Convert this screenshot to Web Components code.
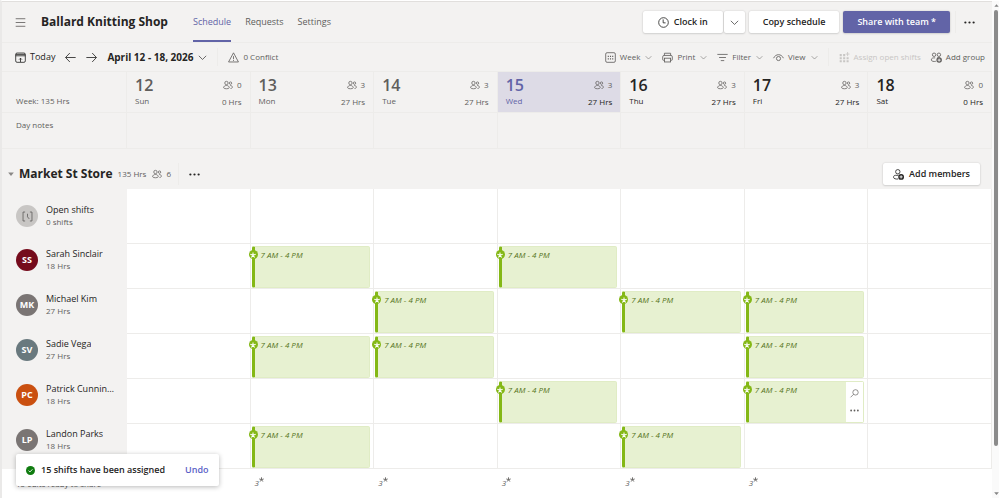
<!DOCTYPE html>
<html lang="en">
<head>
<meta charset="utf-8">
<meta name="viewport" content="width=device-width, initial-scale=1">
<title>Shifts - Ballard Knitting Shop</title>
<style>
  :root {
    --bg: #f3f2f1;
    --line: #edecea;
    --text: #252423;
    --soft: #605e5c;
    --muted: #8a8886;
    --brand: #6264a7;
    --green: #84b816;
    --small: 8px;
    --base: 9px;
  }
  body {
    margin: 0;
    background: #fff;
    color: var(--text);
    font: 400 9px/12px "Open Sans", "Noto Sans", sans-serif;
  }
</style>
</head>
<body>
<shifts-app></shifts-app>

<script>
const ICONS = {
  menu: '<path d="M1 2.5h14M1 8h14M1 13.5h14"/>',
  today: '<rect x="1" y="1.5" width="14" height="13.5" rx="2"/><path d="M1 3.5h14M1 5.5h14M8 14.5V9M6 11l2-2 2 2"/>',
  left: '<path d="M15.5 8H1M7 1.5L.8 8 7 14.5"/>',
  right: '<path d="M.5 8H15M9 1.5L15.2 8 9 14.5"/>',
  chevron: '<path d="M1.5 5L8 11.5 14.5 5"/>',
  warn: '<path d="M8 1.2L15.2 14.5H.8z" stroke-linejoin="round"/><path d="M8 6v4.5M8 11.7v1.3"/>',
  week: '<rect x="1" y="1" width="14" height="14" rx="2"/><path d="M4 6.5h1.6M7.2 6.5h1.6M10.4 6.5H12M4 10h1.6M7.2 10h1.6M10.4 10H12" stroke-width="1.8"/>',
  print: '<path d="M3.5 5V1.8h9V5M3.5 12H2a1 1 0 0 1-1-1V7a2 2 0 0 1 2-2h10a2 2 0 0 1 2 2v4a1 1 0 0 1-1 1h-1.5"/><rect x="3.5" y="9" width="9" height="5.5"/>',
  filter: '<path d="M.5 3.5h15M3 8h10M5.5 12.5h5"/>',
  view: '<path d="M.8 9C4 2.2 12 2.2 15.2 9"/><circle cx="8" cy="9.5" r="3"/>',
  assign: '<path d="M1 3h3v3H1zM6 3h3v3H6zM1 7.5h3v3H1zM6 7.5h3v3H6zM11 7.5h3v3h-3zM1 12h3v3H1zM6 12h3v3H6zM11 12h3v3h-3z" fill="currentColor" stroke="none"/><path d="M12.5 0v6M9.8 3h5.4"/>',
  people: '<circle cx="5.5" cy="4.8" r="2.7"/><path d="M1 12.5c0-5 9-5 9 0 0 2-9 2-9 0z"/><circle cx="12" cy="5" r="1.9"/><path d="M11.5 8.8c4-.2 5 4.7.5 4.8"/>',
  addGroup: '<circle cx="4.5" cy="4" r="2.5"/><circle cx="11.5" cy="4" r="2.5"/><path d="M7 13.5c-3 .8-6.5 0-6.5-2C.5 9 2 8.5 6 8.5M9 8.5h4"/><circle cx="11.8" cy="11.8" r="4" fill="currentColor" stroke="none"/><path d="M11.8 9.6v4.4M9.6 11.8H14" stroke="#fff" stroke-width="1.2"/>',
  addMember: '<circle cx="7" cy="4" r="3.2"/><path d="M7.5 14.5C4 15 .8 14 .8 12 .8 10 2 9.2 3.5 9.2H8"/><circle cx="11.8" cy="11.5" r="4.2" fill="currentColor" stroke="none"/><path d="M11.8 9.2v4.6M9.5 11.5h4.6" stroke="#fff" stroke-width="1.3"/>',
  clock: '<circle cx="8" cy="8" r="7"/><path d="M7.5 3.5V8.5H11"/>',
  more: '<g fill="currentColor" stroke="none"><circle cx="2" cy="8" r="1.6"/><circle cx="8" cy="8" r="1.6"/><circle cx="14" cy="8" r="1.6"/></g>',
  caret: '<path d="M.5 4h15L8 13z" fill="currentColor" stroke="none"/>',
  caretUp: '<path d="M1 12h14L8 4z" fill="currentColor" stroke="none"/>',
  search: '<circle cx="9.8" cy="6" r="4.8"/><path d="M6.3 9.5L1 14.8"/>',
  check: '<circle cx="8" cy="8" r="8" fill="currentColor" stroke="none"/><path d="M4.5 8.2L7 10.6l4.5-4.8" stroke="#fff" stroke-width="1.5"/>',
  star: '<path d="M8 8.5V1M8 8.5L.9 6.2M8 8.5l7.1-2.3M8 8.5l-4.400 6.100M8 8.5l4.400 6.100" stroke-width="2.8"/>',
  open: '<path d="M4.5 1.5H1.5v13h3M11.5 1.5h3v13h-3M8 4v4.5l2.5 3"/>'
}

const DAYS = [
  { date: 12, name: 'Sun', people: 0, hours: 0, when: 'past' },
  { date: 13, name: 'Mon', people: 3, hours: 27, when: 'past' },
  { date: 14, name: 'Tue', people: 3, hours: 27, when: 'past' },
  { date: 15, name: 'Wed', people: 3, hours: 27, when: 'today' },
  { date: 16, name: 'Thu', people: 3, hours: 27, when: 'next' },
  { date: 17, name: 'Fri', people: 3, hours: 27, when: 'next' },
  { date: 18, name: 'Sat', people: 0, hours: 0, when: 'next' }
]

const MEMBERS = [
  { name: 'Sarah Sinclair', initials: 'SS', hours: 18, color: '#750b1c', shifts: [13, 15] },
  { name: 'Michael Kim', initials: 'MK', hours: 27, color: '#7a7574', shifts: [14, 16, 17] },
  { name: 'Sadie Vega', initials: 'SV', hours: 27, color: '#69797e', shifts: [13, 14, 17] },
  { name: 'Patrick Cunningham', initials: 'PC', hours: 18, color: '#ca5010', shifts: [15, 17], active: 17 },
  { name: 'Landon Parks', initials: 'LP', hours: 18, color: '#7a7574', shifts: [13, 16] }
]

class ShadowElement extends HTMLElement {
  constructor () {
    super()
    this.shadow = this.attachShadow({ mode: 'open' })
  }

  connectedCallback () {
    this.render()
  }
}

class UiIcon extends ShadowElement {
  render () {
    this.shadow.innerHTML =
      /*html*/`
      <style>
        :host{
          display: inline-flex;
          flex: none;
          height: var(--icon, 11px);
          width: var(--icon, 11px);
        }
        svg{
          fill: none;
          height: 100%;
          overflow: visible;
          stroke: currentColor;
          stroke-width: 1.2;
          width: 100%;
        }
      </style>
      <svg viewBox="0 0 16 16" aria-hidden="true">${ICONS[this.getAttribute('name')]}</svg>
      `
  }
}

class UiButton extends ShadowElement {
  render () {
    const label = this.getAttribute('label')
    this.shadow.innerHTML =
      /*html*/`
      <style>
        :host{
          display: inline-flex;
        }
        button{
          align-items: center;
          background: #fff;
          border: 0;
          border-radius: 2px;
          box-shadow: 0 0 2px rgba(0, 0, 0, 0.16), 0 1px 2px rgba(0, 0, 0, 0.1);
          color: var(--text);
          display: flex;
          font: inherit;
          font-weight: 600;
          gap: 5px;
          height: 22px;
          justify-content: center;
          padding: 0 var(--pad, 14px);
          white-space: nowrap;
        }
        :host([primary]) button{
          background: var(--brand);
          color: #fff;
        }
        :host([quiet]) button{
          background: none;
          box-shadow: none;
          padding: 0;
        }
      </style>
      <button type="button" ${label ? `aria-label="${label}"` : ''}><slot></slot></button>
      `
  }
}

class ShiftsHeader extends ShadowElement {
  render () {
    this.shadow.innerHTML =
      /*html*/`
      <style>
        :host{
          align-items: center;
          border-bottom: 1px solid var(--line);
          display: flex;
          height: 40px;
          padding: 0 17px 0 13px;
        }
        h1{
          font-size: 12px;
          font-weight: 700;
          line-height: 16px;
          margin: 0 25px 0 15px;
          white-space: nowrap;
        }
        nav{
          align-self: stretch;
          display: flex;
          gap: 14px;
        }
        nav a{
          align-items: center;
          border-bottom: 2px solid transparent;
          border-top: 2px solid transparent;
          color: var(--soft);
          display: flex;
          text-decoration: none;
        }
        nav a.active{
          border-bottom-color: var(--brand);
          color: var(--brand);
        }
        .actions{
          align-items: center;
          display: flex;
          gap: 4px;
          margin-left: auto;
        }
        .split{
          display: flex;
          gap: 1px;
        }
        .clock{
          --pad: 15px;
        }
        .arrow{
          --icon: 9px;
          --pad: 6px;
        }
        .more{
          border-left: 1px solid var(--line);
          margin-left: 1px;
          padding-left: 8px;
        }
      </style>

      <ui-button quiet label="Navigation"><ui-icon name="menu" style="color: var(--soft)"></ui-icon></ui-button>
      <h1>Ballard Knitting Shop</h1>
      <nav>
        <a href="#schedule" class="active">Schedule</a>
        <a href="#requests">Requests</a>
        <a href="#settings">Settings</a>
      </nav>
      <div class="actions">
        <div class="split">
          <ui-button class="clock"><ui-icon name="clock"></ui-icon>Clock in</ui-button>
          <ui-button class="arrow" label="Clock options"><ui-icon name="chevron"></ui-icon></ui-button>
        </div>
        <ui-button>Copy schedule</ui-button>
        <ui-button primary>Share with team *</ui-button>
        <ui-button class="more" quiet label="More options"><ui-icon name="more"></ui-icon></ui-button>
      </div>
      `
  }
}

class ToolbarItem extends ShadowElement {
  render () {
    const arrow = this.hasAttribute('menu') ? '<ui-icon class="arrow" name="chevron"></ui-icon>' : ''
    const icon = this.getAttribute('icon')
    this.shadow.innerHTML =
      /*html*/`
      <style>
        :host{
          color: var(--soft);
          display: inline-flex;
          font-size: var(--small);
        }
        button{
          align-items: center;
          background: none;
          border: 0;
          color: inherit;
          display: flex;
          font: inherit;
          gap: 4px;
          padding: 0;
          white-space: nowrap;
        }
        .arrow{
          --icon: 7px;
          margin-left: 1px;
        }
        :host([strong]){
          color: var(--text);
          font-size: 10px;
          font-weight: 700;
        }
        :host([strong]) .arrow{
          --icon: 9px;
        }
        :host([large]){
          color: var(--text);
          font-size: var(--base);
        }
        button:disabled{
          color: #c8c6c4;
        }
      </style>
      <button type="button" ${this.hasAttribute('disabled') ? 'disabled' : ''} ${this.title ? `aria-label="${this.title}"` : ''}>
        ${icon ? `<ui-icon name="${icon}"></ui-icon>` : ''}<slot></slot>${arrow}
      </button>
      `
  }
}

class ShiftsToolbar extends ShadowElement {
  render () {
    this.shadow.innerHTML =
      /*html*/`
      <style>
        :host{
          align-items: center;
          border-bottom: 1px solid var(--line);
          display: flex;
          height: 28px;
          justify-content: space-between;
          padding: 0 7px 0 13px;
        }
        div{
          align-items: center;
          display: flex;
          gap: 10px;
        }
        i{
          background: var(--line);
          height: 18px;
          width: 1px;
        }
      </style>

      <div>
        <toolbar-item large icon="today">Today</toolbar-item>
        <toolbar-item large icon="left" title="Previous week"></toolbar-item>
        <toolbar-item large icon="right" title="Next week"></toolbar-item>
        <toolbar-item strong menu>April 12 - 18, 2026</toolbar-item>
        <i></i>
        <toolbar-item icon="warn">0 Conflict</toolbar-item>
      </div>
      <div>
        <toolbar-item icon="week" menu>Week</toolbar-item>
        <toolbar-item icon="print" menu>Print</toolbar-item>
        <toolbar-item icon="filter" menu>Filter</toolbar-item>
        <toolbar-item icon="view" menu>View</toolbar-item>
        <i></i>
        <toolbar-item icon="assign" disabled>Assign open shifts</toolbar-item>
        <toolbar-item icon="addGroup">Add group</toolbar-item>
      </div>
      `
  }
}

class DayHead extends ShadowElement {
  render () {
    const day = DAYS[this.getAttribute('index')]
    this.shadow.innerHTML =
      /*html*/`
      <style>
        :host{
          display: flex;
          font-size: var(--small);
          height: 40px;
          justify-content: space-between;
        }
        .date{
          padding: 3px 8px 0;
        }
        .stats{
          padding: 4px 8px 0;
          text-align: right;
        }
        strong{
          display: block;
          font-size: 16px;
          font-weight: 600;
          line-height: 20px;
        }
        .count{
          align-items: center;
          color: var(--soft);
          display: flex;
          gap: 4px;
          height: 18px;
          justify-content: flex-end;
          margin-bottom: 2px;
          --icon: 10px;
        }
        .past{
          color: var(--soft);
        }
        .date.today{
          color: var(--brand);
        }
      </style>
      <div class="date ${day.when}"><strong>${day.date}</strong>${day.name}</div>
      <div class="stats ${day.when}">
        <div class="count"><ui-icon name="people"></ui-icon>${day.people}</div>
        ${day.hours} Hrs
      </div>
      `
  }
}

class MemberCell extends ShadowElement {
  render () {
    this.shadow.innerHTML =
      /*html*/`
      <style>
        :host{
          align-items: center;
          display: flex;
          gap: 8px;
          padding: 4px 12px 0 14px;
        }
        .avatar{
          align-items: center;
          background: var(--avatar, #c8c6c4);
          border-radius: 50%;
          color: #fff;
          display: flex;
          flex: none;
          font-weight: 700;
          height: 22px;
          justify-content: center;
          width: 22px;
        }
        .info{
          min-width: 0;
        }
        .name{
          overflow: hidden;
          text-overflow: ellipsis;
          white-space: nowrap;
        }
        .sub{
          color: var(--soft);
          font-size: var(--small);
        }
      </style>
      <div class="avatar"><slot name="avatar"></slot></div>
      <div class="info">
        <div class="name"><slot></slot></div>
        <div class="sub"><slot name="sub"></slot></div>
      </div>
      `
  }
}

class ShiftCard extends ShadowElement {
  render () {
    const tools = /*html*/`
      <div class="tools">
        <button type="button" aria-label="View shift"><ui-icon name="search"></ui-icon></button>
        <button type="button" aria-label="Shift options"><ui-icon name="more"></ui-icon></button>
      </div>`
    this.shadow.innerHTML =
      /*html*/`
      <style>
        :host{
          background: #e7f1d1;
          border: 1px solid #e0ecc5;
          border-left: 3px solid var(--green);
          border-radius: 2px;
          box-sizing: border-box;
          color: #55731a;
          display: flex;
          font-size: var(--small);
          font-style: italic;
          height: 42px;
          justify-content: space-between;
          margin: 2px 3px 0 1px;
          position: relative;
        }
        .time{
          padding: 2px 0 0 6px;
          white-space: nowrap;
        }
        /* unshared marker sits on the colour bar */
        .badge{
          align-items: center;
          background: var(--green);
          border-radius: 50%;
          color: #fff;
          display: flex;
          height: 9px;
          justify-content: center;
          left: -6px;
          position: absolute;
          top: 3px;
          width: 9px;
          --icon: 6px;
        }
        .tools{
          background: #fff;
          color: var(--soft);
          display: flex;
          flex-direction: column;
          justify-content: space-evenly;
          padding: 0 4px;
          --icon: 9px;
        }
        button{
          background: none;
          border: 0;
          color: inherit;
          display: flex;
          padding: 0;
        }
      </style>
      <span class="badge"><ui-icon name="star"></ui-icon></span>
      <span class="time"><slot></slot></span>
      ${this.hasAttribute('active') ? tools : ''}
      `
  }
}

class GroupHeader extends ShadowElement {
  render () {
    this.shadow.innerHTML =
      /*html*/`
      <style>
        :host{
          align-items: center;
          color: var(--soft);
          display: flex;
          font-size: var(--small);
          height: 30px;
          padding: 10px 12px 0 6px;
        }
        h2{
          color: var(--text);
          font-size: 12px;
          font-weight: 700;
          line-height: 16px;
          margin: 0 5px;
        }
        .caret{
          --icon: 6px;
        }
        .people{
          margin: 0 4px 0 6px;
          --icon: 10px;
        }
        .more{
          border-left: 1px solid var(--line);
          margin-left: 7px;
          padding-left: 10px;
        }
        .add{
          font-size: var(--base);
          margin-left: auto;
          --pad: 10px;
        }
      </style>
      <ui-button class="caret" quiet label="Collapse group"><ui-icon name="caret" style="color: var(--muted)"></ui-icon></ui-button>
      <h2>Market St Store</h2>
      <span>135 Hrs</span>
      <ui-icon class="people" name="people"></ui-icon>
      <span>6</span>
      <ui-button class="more" quiet label="Group options"><ui-icon name="more"></ui-icon></ui-button>
      <ui-button class="add"><ui-icon name="addMember"></ui-icon>Add members</ui-button>
      `
  }
}

class ScheduleGrid extends ShadowElement {
  memberRow (member) {
    const cells = DAYS.map(({ date }) => {
      const shift = member.shifts.includes(date)
        ? `<shift-card ${member.active === date ? 'active' : ''}>7 AM - 4 PM</shift-card>`
        : ''
      return `<td>${shift}</td>`
    })
    return /*html*/`
      <tr class="member">
        <th scope="row">
          <member-cell style="--avatar: ${member.color}">
            <span slot="avatar">${member.initials}</span>${member.name}<span slot="sub">${member.hours} Hrs</span>
          </member-cell>
        </th>
        ${cells.join('')}
      </tr>`
  }

  render () {
    const empty = DAYS.map(() => '<td></td>').join('')
    this.shadow.innerHTML =
      /*html*/`
      <style>
        :host{
          display: block;
        }
        table{
          border-spacing: 0;
          table-layout: fixed;
          width: 100%;
        }
        th, td{
          border-bottom: 1px solid var(--line);
          border-right: 1px solid var(--line);
          box-sizing: border-box;
          font-weight: 400;
          padding: 0;
          text-align: left;
          vertical-align: top;
        }
        .corner{
          width: 125px;
        }
        .label{
          color: var(--soft);
          font-size: var(--small);
          padding-left: 14px;
        }
        .corner.label{
          padding-top: 23px;
        }
        .today{
          background: #dddbe6;
        }
        .notes > *{
          height: 36px;
        }
        .notes .label{
          padding-top: 6px;
        }
        .group td{
          border: 0;
        }
        tbody .member td, .open td{
          background: #fff;
        }
        tbody th{
          border-color: var(--bg);
        }
        .open > *{
          height: 55px;
        }
        .open member-cell{
          padding-top: 15px;
        }
        .member > *{
          height: 45px;
        }
        tfoot th, tfoot td{
          background: #fff;
          border-color: #fff;
          height: 29px;
        }
        tfoot td{
          color: var(--soft);
          font-size: var(--small);
          font-style: italic;
          padding: 8px 0 0 4px;
        }
        tfoot .label{
          padding-top: 9px;
        }
        tfoot ui-icon{
          --icon: 5px;
          vertical-align: top;
        }
      </style>

      <table>
        <thead>
          <tr>
            <th class="corner label">Week: 135 Hrs</th>
            ${DAYS.map((day, i) => `<th scope="col" class="${day.when}"><day-head index="${i}"></day-head></th>`).join('')}
          </tr>
          <tr class="notes"><th scope="row" class="label">Day notes</th>${empty}</tr>
        </thead>
        <tbody>
          <tr class="group"><td colspan="8"><group-header></group-header></td></tr>
          <tr class="open">
            <th scope="row">
              <member-cell>
                <ui-icon slot="avatar" name="open" style="color: var(--soft)"></ui-icon>Open shifts<span slot="sub">0 shifts</span>
              </member-cell>
            </th>
            ${empty}
          </tr>
          ${MEMBERS.map(member => this.memberRow(member)).join('')}
        </tbody>
        <tfoot>
          <tr>
            <th scope="row" class="label">15 edits ready to share</th>
            ${DAYS.map(day => `<td>${day.people ? `${day.people}<ui-icon name="star"></ui-icon>` : ''}</td>`).join('')}
          </tr>
        </tfoot>
      </table>
      `
  }
}

class ShiftToast extends ShadowElement {
  render () {
    this.shadow.innerHTML =
      /*html*/`
      <style>
        :host{
          align-items: center;
          background: #fff;
          border-radius: 2px;
          bottom: 12px;
          box-shadow: 0 1px 5px rgba(0, 0, 0, 0.28);
          display: flex;
          font-weight: 600;
          gap: 6px;
          left: 14px;
          padding: 10px;
          position: absolute;
        }
        ui-icon{
          color: #107c10;
          --icon: 9px;
        }
        button{
          background: none;
          border: 0;
          color: #5b5fc7;
          font: inherit;
          margin-left: 14px;
          padding: 0;
        }
      </style>
      <ui-icon name="check"></ui-icon>
      <span role="status"><slot></slot></span>
      <button type="button">Undo</button>
      `
  }
}

class ScrollRail extends ShadowElement {
  render () {
    this.shadow.innerHTML =
      /*html*/`
      <style>
        :host{
          align-items: center;
          background: #fafafa;
          color: #858585;
          display: flex;
          flex: none;
          flex-direction: column;
          gap: 2px;
          padding: 2px 0 2px 1px;
          width: 6px;
          --icon: 5px;
        }
        .track{
          flex: 1;
          width: 4px;
        }
        .thumb{
          background: #8b8b8b;
          border-radius: 2px;
          height: 91%;
        }
      </style>
      <ui-icon name="caretUp"></ui-icon>
      <div class="track"><div class="thumb"></div></div>
      <ui-icon name="caret"></ui-icon>
      `
  }
}

class ShiftsApp extends ShadowElement {
  render () {
    this.shadow.innerHTML =
      /*html*/`
      <style>
        :host{
          border-left: 2px solid #eae9e8;
          border-top: 1px solid #fff;
          box-sizing: border-box;
          display: flex;
          min-height: 100vh;
          position: relative;
        }
        main{
          border-top: 1px solid #e1dfdd;
          flex: 1;
          min-width: 0;
        }
        shifts-header, shifts-toolbar, schedule-grid{
          background: var(--bg);
        }
      </style>
      <main>
        <shifts-header></shifts-header>
        <shifts-toolbar></shifts-toolbar>
        <schedule-grid></schedule-grid>
      </main>
      <scroll-rail></scroll-rail>
      <shift-toast>15 shifts have been assigned</shift-toast>
      `
  }
}

customElements.define('ui-icon', UiIcon)
customElements.define('ui-button', UiButton)
customElements.define('shifts-header', ShiftsHeader)
customElements.define('toolbar-item', ToolbarItem)
customElements.define('shifts-toolbar', ShiftsToolbar)
customElements.define('day-head', DayHead)
customElements.define('member-cell', MemberCell)
customElements.define('shift-card', ShiftCard)
customElements.define('group-header', GroupHeader)
customElements.define('schedule-grid', ScheduleGrid)
customElements.define('shift-toast', ShiftToast)
customElements.define('scroll-rail', ScrollRail)
customElements.define('shifts-app', ShiftsApp)
</script>
</body>
</html>
